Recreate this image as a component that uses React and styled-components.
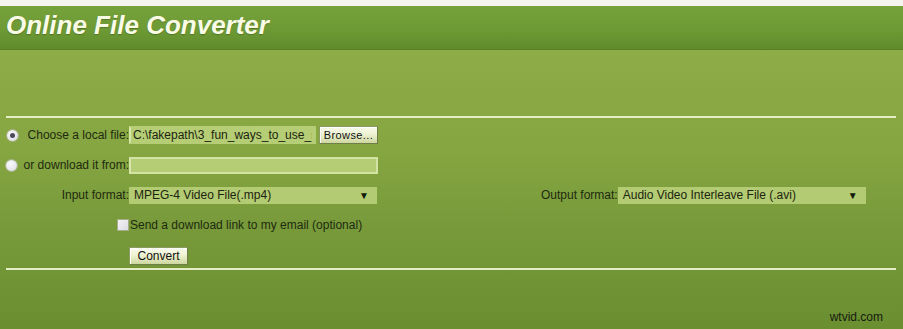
import React from "react";
import styled, { createGlobalStyle } from "styled-components";

const GlobalStyle = createGlobalStyle`
  html, body {
    margin: 0;
    padding: 0;
    background: #f3f4ee;
  }
  body {
    font-family: "Liberation Sans", Arial, sans-serif;
  }
`;

const Page = styled.div`
  width: 903px;
  height: 329px;
  display: flex;
  flex-direction: column;
  overflow: hidden;
`;

const TopStrip = styled.div`
  height: 6px;
  background: #f4f5ef;
`;

const Header = styled.header`
  height: 44px;
  box-sizing: border-box;
  padding: 0 0 6px 6px;
  background: linear-gradient(180deg, #76a23c 0%, #6e9a35 55%, #5f8b2b 100%);
  border-bottom: 1px solid #587f27;
`;

const Title = styled.h1`
  margin: 0;
  font-size: 26px;
  line-height: 38px;
  font-weight: bold;
  font-style: italic;
  color: #fbfce8;
  text-shadow: 0 1px 1px rgba(40, 60, 10, 0.35);
`;

const Body = styled.main`
  flex: 1;
  display: flex;
  flex-direction: column;
  padding: 66px 7px 0 6px;
  background: linear-gradient(180deg, #8eac47 0%, #86a641 35%, #77993a 65%, #6a8f30 100%);
`;

const Rule = styled.div`
  height: 2px;
  background: #e4edc6;
`;

const Form = styled.form`
  display: flex;
  flex-direction: column;
  padding-top: 2px;
  margin: 0;
`;

const Row = styled.div`
  height: ${(p) => p.$h || 30}px;
  box-sizing: border-box;
  padding-top: ${(p) => p.$pt || 0}px;
  display: flex;
  align-items: ${(p) => (p.$pt ? "flex-start" : "center")};
`;

const LabelCell = styled.label`
  width: 123px;
  flex: none;
  display: flex;
  align-items: center;
  justify-content: ${(p) => (p.$radio ? "space-between" : "flex-end")};
  padding-left: ${(p) => p.$pad || 0}px;
  box-sizing: border-box;
  font-size: 12px;
  color: #1e2a10;
  white-space: nowrap;
`;

const Radio = styled.span`
  width: 11px;
  height: 11px;
  border-radius: 50%;
  background: radial-gradient(circle at 40% 35%, #fafafc 0%, #e2e2ea 70%, #c8c8d2 100%);
  box-shadow: 0 0 0 1px #a9b38c;
  display: flex;
  align-items: center;
  justify-content: center;
  &::after {
    content: "";
    width: 5px;
    height: 5px;
    border-radius: 50%;
    background: ${(p) => (p.$checked ? "#4a4a5a" : "transparent")};
  }
`;

const TextInput = styled.input`
  width: ${(p) => p.$w}px;
  height: ${(p) => p.$hgt || 17}px;
  box-sizing: border-box;
  margin: 0;
  padding: 0 2px;
  background: #b5cd74;
  border: 2px solid ${(p) => (p.$bordered ? "#d3e3a4" : "#b5cd74")};
  border-left-color: #d8e6ac;
  border-radius: 0;
  outline: none;
  font-family: "Liberation Sans", Arial, sans-serif;
  font-size: 12px;
  color: #1c2410;
`;

const Select = styled.div`
  width: 248px;
  height: 17px;
  box-sizing: border-box;
  margin-left: ${(p) => p.$ml || 0}px;
  padding: 0 8px 0 5px;
  display: flex;
  align-items: center;
  justify-content: space-between;
  background: #b3cb72;
  font-size: 12px;
  color: #1c2410;
  white-space: nowrap;
`;

const Arrow = styled.span`
  font-size: 10px;
  color: #141a0c;
`;

const Button = styled.button`
  height: 18px;
  width: 59px;
  padding: 0;
  margin-left: ${(p) => p.$ml || 0}px;
  font-family: "Liberation Sans", Arial, sans-serif;
  font-size: ${(p) => p.$fs || 11}px;
  letter-spacing: ${(p) => (p.$fs ? 0 : 0.4)}px;
  color: #111;
  background: linear-gradient(180deg, #fbfced 0%, #eef2d2 45%, #cdd79f 100%);
  border: 1px solid #8c9a63;
  border-right-color: #6f7d48;
  border-bottom-color: #6f7d48;
  box-shadow: inset 1px 1px 0 #ffffff;
`;

const Group = styled.div`
  display: flex;
  align-items: center;
  margin-left: ${(p) => p.$ml || 0}px;
`;

const SideLabel = styled.span`
  font-size: 12px;
  color: #1e2a10;
`;

const CheckRow = styled.label`
  display: flex;
  align-items: center;
  margin-left: 111px;
  font-size: 12px;
  color: #1e2a10;
`;

const Checkbox = styled.span`
  width: 12px;
  height: 12px;
  box-sizing: border-box;
  margin-right: 1px;
  background: linear-gradient(135deg, #f2f2f6 0%, #dcdce4 100%);
  border: 1px solid #a4ad88;
`;

const Footer = styled.footer`
  flex: 1;
  display: flex;
  justify-content: flex-end;
  align-items: flex-end;
  padding: 0 13px 5px 0;
`;

const Watermark = styled.span`
  font-size: 12px;
  color: #161a10;
`;

export default function App() {
  return (
    <Page>
      <GlobalStyle />
      <TopStrip />
      <Header>
        <Title>Online File Converter</Title>
      </Header>
      <Body>
        <Rule />
        <Form onSubmit={(e) => e.preventDefault()}>
          <Row>
            <LabelCell $radio $pad={1}>
              <Radio $checked />
              <span>Choose a local file:</span>
            </LabelCell>
            <TextInput
              $w={187}
              $hgt={18}
              readOnly
              value="C:\fakepath\3_fun_ways_to_use_some_video.mp4"
            />
            <Button type="button" $ml={3}>Browse...</Button>
          </Row>
          <Row>
            <LabelCell $radio>
              <Radio />
              <span>or download it from:</span>
            </LabelCell>
            <TextInput $w={249} $bordered readOnly value="" />
          </Row>
          <Row>
            <LabelCell>Input format:</LabelCell>
            <Select>
              <span>MPEG-4 Video File(.mp4)</span>
              <Arrow>▼</Arrow>
            </Select>
            <Group $ml={164}>
              <SideLabel>Output format:</SideLabel>
              <Select>
                <span>Audio Video Interleave File (.avi)</span>
                <Arrow>▼</Arrow>
              </Select>
            </Group>
          </Row>
          <Row>
            <CheckRow>
              <Checkbox />
              Send a download link to my email (optional)
            </CheckRow>
          </Row>
          <Row $h={28} $pt={7}>
            <Button type="submit" $ml={123} $fs={12}>Convert</Button>
          </Row>
        </Form>
        <Rule />
        <Footer>
          <Watermark>wtvid.com</Watermark>
        </Footer>
      </Body>
    </Page>
  );
}
